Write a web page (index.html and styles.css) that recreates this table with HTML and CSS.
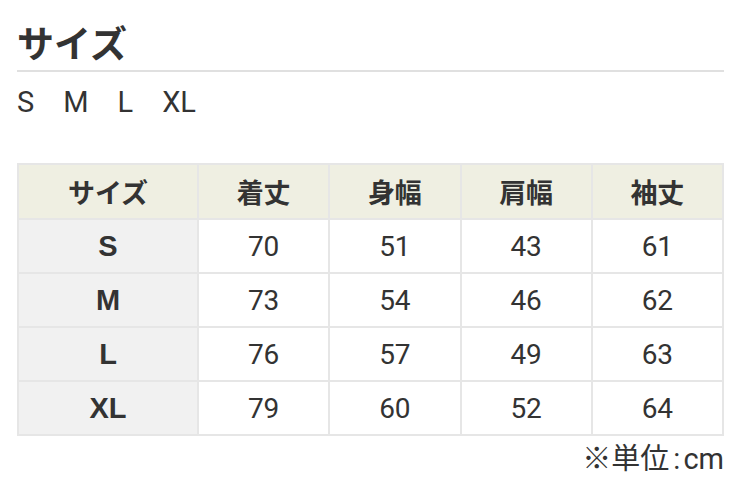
FILE: index.html
```html
<!DOCTYPE html>
<html lang="ja">
<head>
<meta charset="utf-8">
<link rel="stylesheet" href="styles.css">
</head>
<body>
<div class="page">
  <h2 class="title">サイズ</h2>
  <div class="sizes"><span>S</span><span>M</span><span>L</span><span>XL</span></div>
  <table class="size-table">
    <thead>
      <tr><th>サイズ</th><th>着丈</th><th>身幅</th><th>肩幅</th><th>袖丈</th></tr>
    </thead>
    <tbody>
      <tr><th>S</th><td>70</td><td>51</td><td>43</td><td>61</td></tr>
      <tr><th>M</th><td>73</td><td>54</td><td>46</td><td>62</td></tr>
      <tr><th>L</th><td>76</td><td>57</td><td>49</td><td>63</td></tr>
      <tr><th>XL</th><td>79</td><td>60</td><td>52</td><td>64</td></tr>
    </tbody>
  </table>
  <p class="unit">※単位<span class="colon">:</span>cm</p>
</div>
</body>
</html>
```
FILE: styles.css
```css
html, body {
  margin: 0;
  padding: 0;
  background: #fff;
}
body {
  font-family: Roboto, "Noto Sans CJK JP", sans-serif;
  color: #333;
}
.page {
  padding: 17px 18px 0 17px;
}
.title {
  margin: 0;
  font-family: "Noto Sans CJK JP", sans-serif;
  font-size: 37px;
  font-weight: 700;
  line-height: 50px;
  padding-bottom: 3px;
  border-bottom: 2px solid #e0e0e0;
  color: #333;
}
.sizes {
  display: flex;
  gap: 29px;
  margin-top: 15px;
  font-size: 29px;
  line-height: 30px;
  color: #333;
}
.size-table {
  margin-top: 46px;
  width: 707px;
  border-collapse: collapse;
  table-layout: fixed;
}
.size-table th,
.size-table td {
  border: 2px solid #e6e6e6;
  text-align: center;
  padding: 0;
  height: 52px;
}
.size-table thead th {
  background: #efefe2;
  font-family: "Noto Sans CJK JP", sans-serif;
  font-size: 27px;
  font-weight: 700;
  height: 53px;
}
.size-table thead th:first-child {
  width: 178px;
}
.size-table tbody th {
  background: #f1f1f1;
  font-family: "Liberation Sans", Arial, sans-serif;
  font-size: 29px;
  font-weight: 700;
}
.size-table td {
  font-size: 28px;
  font-weight: 400;
}
.unit {
  margin: 8px 0 0;
  text-align: right;
  font-size: 29px;
  line-height: 30px;
  font-family: Roboto, "Noto Sans CJK JP", sans-serif;
}
.unit .colon {
  margin: 0 3px 0 4px;
}
```
